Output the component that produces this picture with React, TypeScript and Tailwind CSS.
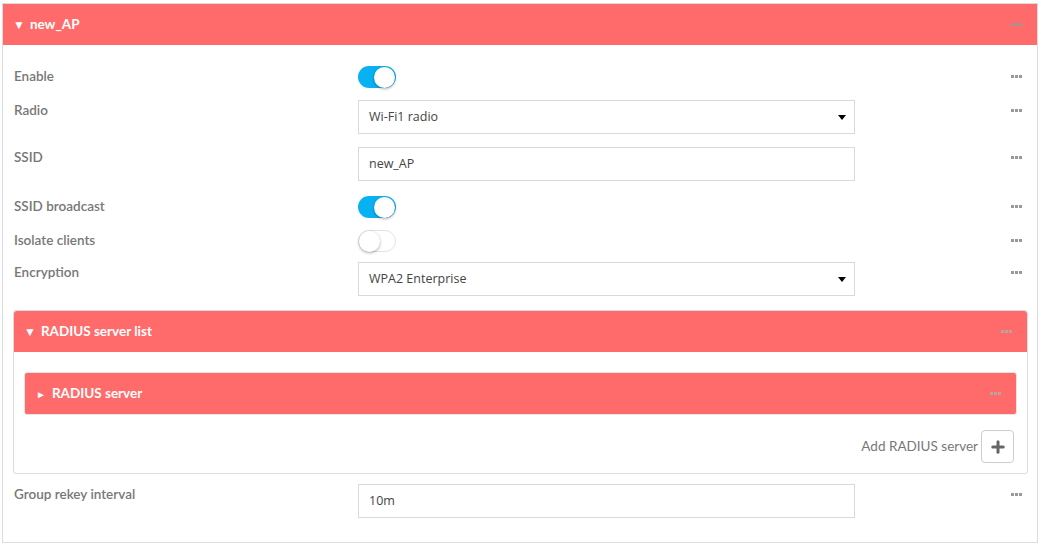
import { Plus } from "lucide-react";

function Dots({ light = false }: { light?: boolean }) {
  const c = light ? "bg-[#b9a3a3]" : "bg-[#999]";
  return (
    <div className="flex gap-[1px]">
      <span className={`h-[3px] w-[3px] ${c}`} />
      <span className={`h-[3px] w-[3px] ${c}`} />
      <span className={`h-[3px] w-[3px] ${c}`} />
    </div>
  );
}

function Toggle({ on }: { on: boolean }) {
  return (
    <div
      className={`relative h-[22px] w-[38px] rounded-full ${
        on ? "bg-[#08b2f2]" : "border border-[#e3e3e3] bg-white"
      }`}
    >
      <span
        className={`absolute h-[21px] w-[21px] rounded-full bg-white shadow-[0_1px_3px_rgba(0,0,0,0.35)] ${
          on ? "right-[1px] top-[0.5px]" : "left-0 top-0"
        }`}
      />
    </div>
  );
}

function Field({ value, select = false }: { value: string; select?: boolean }) {
  return (
    <div className="flex h-[34px] w-[497px] items-center justify-between border border-[#d9d9d9] bg-white pl-[10px] pr-[8px]">
      <span className="text-[12.5px] text-[#444] font-['Open_Sans',sans-serif]">{value}</span>
      {select && (
        <span className="h-0 w-0 border-x-[4px] border-t-[5px] border-x-transparent border-t-black" />
      )}
    </div>
  );
}

function Row({
  label,
  children,
  mt,
}: {
  label: string;
  children: React.ReactNode;
  mt: string;
}) {
  return (
    <div className={`flex items-start ${mt}`}>
      <div className="w-[345px] pl-[1px] text-[13.5px] font-semibold leading-[20px] text-[#777]">{label}</div>
      <div className="flex-1">{children}</div>
      <div className="flex h-[20px] w-[26px] items-center">
        <Dots />
      </div>
    </div>
  );
}

export default function App() {
  return (
    <div className="min-h-[545px] bg-white font-['Lato','Open_Sans',sans-serif]">
      <div className="ml-[2px] mt-[3px] w-[1036px] border border-[#dcdcdc]">
        <div className="flex h-[41px] items-center justify-between bg-[#ff6b6b] pl-[10px] pr-[15px]">
          <span className="text-[13.5px] font-bold text-white">
            <span className="mr-[5px] text-[12px]">▼</span>new_AP
          </span>
          <Dots />
        </div>

        <div className="pb-[24px] pl-[10px] pt-[21px]">
          <Row label="Enable" mt="mt-0">
            <Toggle on />
          </Row>
          <Row label="Radio" mt="mt-[12px]">
            <Field value="Wi-Fi1 radio" select />
          </Row>
          <Row label="SSID" mt="mt-[13px]">
            <Field value="new_AP" />
          </Row>
          <Row label="SSID broadcast" mt="mt-[15px]">
            <Toggle on />
          </Row>
          <Row label="Isolate clients" mt="mt-[12px]">
            <Toggle on={false} />
          </Row>
          <Row label="Encryption" mt="mt-[10px]">
            <Field value="WPA2 Enterprise" select />
          </Row>

          <div className="mr-[9px] mt-[14px] rounded-[3px] border border-[#dcdcdc]">
            <div className="flex h-[41px] items-center justify-between rounded-t-[3px] bg-[#ff6b6b] pl-[10px] pr-[15px]">
              <span className="text-[13.5px] font-bold text-white">
                <span className="mr-[5px] text-[12px]">▼</span>RADIUS server list
              </span>
              <Dots light />
            </div>
            <div className="px-[10px] pb-[10px] pt-[20px]">
              <div className="flex h-[43px] items-center justify-between rounded-[3px] border border-[#e6e6e6] bg-[#ff6b6b] pl-[11px] pr-[15px]">
                <span className="text-[13.5px] font-bold text-white">
                  <span className="mr-[6px] text-[10px]">►</span>RADIUS server
                </span>
                <Dots light />
              </div>
              <div className="mt-[15px] flex items-center justify-end gap-[3px] pr-[3px]">
                <span className="text-[13.5px] text-[#777]">Add RADIUS server</span>
                <button className="flex h-[33px] w-[33px] items-center justify-center rounded-[4px] border border-[#ccc] bg-white">
                  <Plus size={18} strokeWidth={4} className="text-[#666]" />
                </button>
              </div>
            </div>
          </div>

          <Row label="Group rekey interval" mt="mt-[10px]">
            <Field value="10m" />
          </Row>
        </div>
      </div>
    </div>
  );
}
